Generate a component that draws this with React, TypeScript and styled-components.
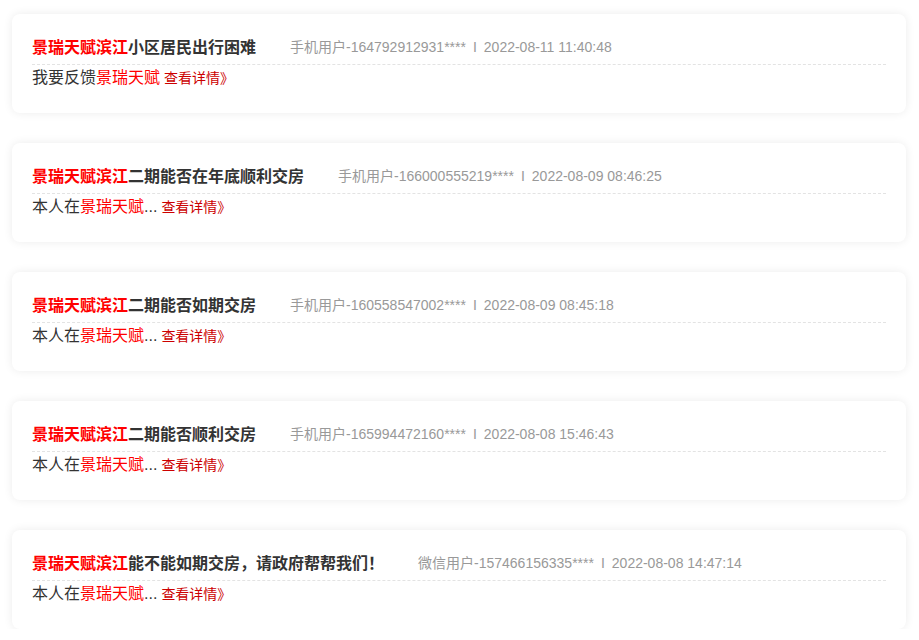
import React from "react";
import styled, { createGlobalStyle } from "styled-components";

const Global = createGlobalStyle`
  html, body { margin: 0; padding: 0; background: #fff; }
  body { font-family: "Liberation Sans", "Noto Sans CJK SC", sans-serif; }
`;

const Page = styled.div`
  padding: 14px 13px 0 12px;
  display: flex;
  flex-direction: column;
  gap: 30px;
`;

const Card = styled.div`
  background: #fff;
  border-radius: 8px;
  box-shadow: 0 0 10px rgba(0, 0, 0, 0.08);
  padding: 20px 20px 23px;
  height: 99px;
  box-sizing: border-box;
`;

const Head = styled.div`
  display: flex;
  align-items: center;
  height: 24px;
  padding-bottom: 6px;
  border-bottom: 1px dashed #e3e3e3;
`;

const Title = styled.div`
  font-size: 16px;
  font-weight: bold;
  color: #333;
  white-space: nowrap;
`;

const Red = styled.span`
  color: #f00;
`;

const Meta = styled.div`
  margin-left: 34px;
  font-size: 14px;
  color: #999;
  white-space: nowrap;
`;

const Sep = styled.span`
  margin: 0 7px;
`;

const Body = styled.div`
  font-size: 16px;
  color: #333;
  line-height: 24px;
  margin-top: 1px;
`;

const More = styled.span`
  color: #c00;
  font-size: 14px;
  margin-left: 4px;
`;

type Item = { title: string; user: string; time: string; lead: string; ellipsis: boolean };

const items: Item[] = [
  { title: "小区居民出行困难", user: "手机用户-164792912931****", time: "2022-08-11 11:40:48", lead: "我要反馈", ellipsis: false },
  { title: "二期能否在年底顺利交房", user: "手机用户-166000555219****", time: "2022-08-09 08:46:25", lead: "本人在", ellipsis: true },
  { title: "二期能否如期交房", user: "手机用户-160558547002****", time: "2022-08-09 08:45:18", lead: "本人在", ellipsis: true },
  { title: "二期能否顺利交房", user: "手机用户-165994472160****", time: "2022-08-08 15:46:43", lead: "本人在", ellipsis: true },
  { title: "能不能如期交房，请政府帮帮我们！", user: "微信用户-157466156335****", time: "2022-08-08 14:47:14", lead: "本人在", ellipsis: true },
];

export default function App() {
  return (
    <>
      <Global />
      <Page>
        {items.map((it, i) => (
          <Card key={i}>
            <Head>
              <Title>
                <Red>景瑞天赋滨江</Red>
                {it.title}
              </Title>
              <Meta>
                {it.user}
                <Sep>I</Sep>
                {it.time}
              </Meta>
            </Head>
            <Body>
              {it.lead}
              <Red>景瑞天赋</Red>
              {it.ellipsis ? "..." : ""}
              <More>查看详情》</More>
            </Body>
          </Card>
        ))}
      </Page>
    </>
  );
}
